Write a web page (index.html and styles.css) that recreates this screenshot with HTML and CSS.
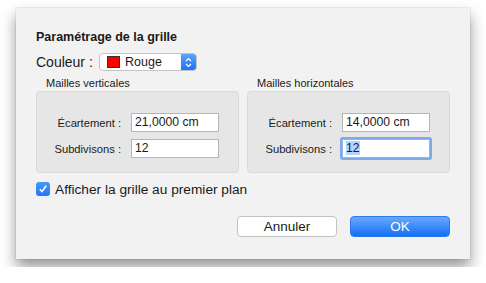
FILE: index.html
```html
<!DOCTYPE html>
<html lang="fr">
<head>
    <meta charset="UTF-8">
    <title>Paramétrage de la grille</title>
    <link rel="stylesheet" href="styles.css">
</head>
<body>
    <div class="window">
        <h1 class="title">Paramétrage de la grille</h1>

        <div class="color-row">
            <span class="color-label">Couleur :</span>
            <div class="popup">
                <span class="swatch"></span>
                <span class="popup-text">Rouge</span>
                <span class="stepper">
                    <svg width="7" height="11" viewBox="0 0 7 11">
                        <path d="M1 4 L3.5 1.5 L6 4 M1 7 L3.5 9.5 L6 7" fill="none" stroke="#fff" stroke-width="1.2"/>
                    </svg>
                </span>
            </div>
        </div>

        <div class="groups">
            <div class="group">
                <div class="group-title">Mailles verticales</div>
                <div class="group-box">
                    <label class="field-label">Écartement :</label>
                    <div class="field">21,0000 cm</div>
                    <label class="field-label">Subdivisons :</label>
                    <div class="field">12</div>
                </div>
            </div>
            <div class="group">
                <div class="group-title">Mailles horizontales</div>
                <div class="group-box">
                    <label class="field-label">Écartement :</label>
                    <div class="field">14,0000 cm</div>
                    <label class="field-label">Subdivisons :</label>
                    <div class="field focused"><span class="selected">12</span></div>
                </div>
            </div>
        </div>

        <div class="check-row">
            <span class="checkbox">
                <svg width="10" height="10" viewBox="0 0 10 10">
                    <path d="M1.8 5.2 L4 7.6 L8.2 1.8" fill="none" stroke="#fff" stroke-width="1.6"/>
                </svg>
            </span>
            <span class="check-text">Afficher la grille au premier plan</span>
        </div>

        <div class="buttons">
            <button class="btn">Annuler</button>
            <button class="btn primary">OK</button>
        </div>
    </div>
</body>
</html>
```

FILE: styles.css
```css
body {
    margin: 0;
    padding: 8px 16px;
    background: #ffffff;
    font-family: "Liberation Sans", Arial, sans-serif;
    color: #1a1a1a;
}

.window {
    width: 454px;
    height: 251px;
    box-sizing: border-box;
    padding: 21px 20px 0 20px;
    background: #f2f2f2;
    box-shadow: 0 8px 14px rgba(0, 0, 0, 0.42), 0 0 0 1px rgba(0, 0, 0, 0.05);
}

.title {
    margin: 0;
    font-size: 12.5px;
    line-height: 16px;
    font-weight: bold;
}

.color-row {
    display: flex;
    align-items: center;
    margin-top: 8px;
    height: 18px;
}

.color-label {
    font-size: 14px;
    width: 63px;
}

.popup {
    display: flex;
    align-items: center;
    width: 98px;
    height: 18px;
    box-sizing: border-box;
    border: 1px solid #c4c4c4;
    border-radius: 4px;
    background: #ffffff;
    overflow: hidden;
}

.swatch {
    width: 11px;
    height: 10px;
    margin: 0 5px 0 7px;
    background: #ff0000;
    border: 1px solid #333;
}

.popup-text {
    flex: 1;
    font-size: 12.5px;
}

.stepper {
    display: flex;
    align-items: center;
    justify-content: center;
    width: 15px;
    height: 100%;
    background: linear-gradient(#5ea2fb, #1d74f5);
}

.groups {
    display: grid;
    grid-template-columns: 203px 203px;
    column-gap: 8px;
    margin-top: 5px;
}

.group-title {
    font-size: 11px;
    line-height: 14px;
    padding-left: 10px;
    margin-bottom: 1px;
}

.group-box {
    display: grid;
    grid-template-columns: 1fr 88px;
    column-gap: 10px;
    row-gap: 7px;
    align-items: center;
    align-content: start;
    height: 82px;
    box-sizing: border-box;
    padding: 21px 19px 0 0;
    background: #e6e6e6;
    border: 1px solid #dadada;
    border-radius: 4px;
}

.field-label {
    font-size: 11.2px;
    text-align: right;
}

.field {
    height: 19px;
    box-sizing: border-box;
    padding: 0 3px;
    font-size: 12.2px;
    line-height: 17px;
    background: #ffffff;
    border: 1px solid #b5b5b5;
}

.field.focused {
    border-color: #8fb5ec;
    box-shadow: 0 0 0 2px #7eaaed;
    border-radius: 1px;
}

.selected {
    background: #b4d4fc;
}

.check-row {
    display: flex;
    align-items: center;
    margin-top: 9px;
    height: 14px;
}

.checkbox {
    display: flex;
    align-items: center;
    justify-content: center;
    width: 14px;
    height: 14px;
    border-radius: 3px;
    background: linear-gradient(#4b98fa, #2178f6);
    margin-right: 5px;
}

.check-text {
    font-size: 13.7px;
}

.buttons {
    display: flex;
    justify-content: flex-end;
    gap: 13px;
    margin-top: 20px;
}

.btn {
    width: 100px;
    height: 21px;
    padding: 0;
    font-family: inherit;
    font-size: 13.5px;
    color: #1a1a1a;
    background: #ffffff;
    border: 1px solid #c2c2c2;
    border-radius: 4px;
}

.btn.primary {
    color: #ffffff;
    border-color: #2c7cf0;
    background: linear-gradient(#68a8fc, #1470f6);
}
```
